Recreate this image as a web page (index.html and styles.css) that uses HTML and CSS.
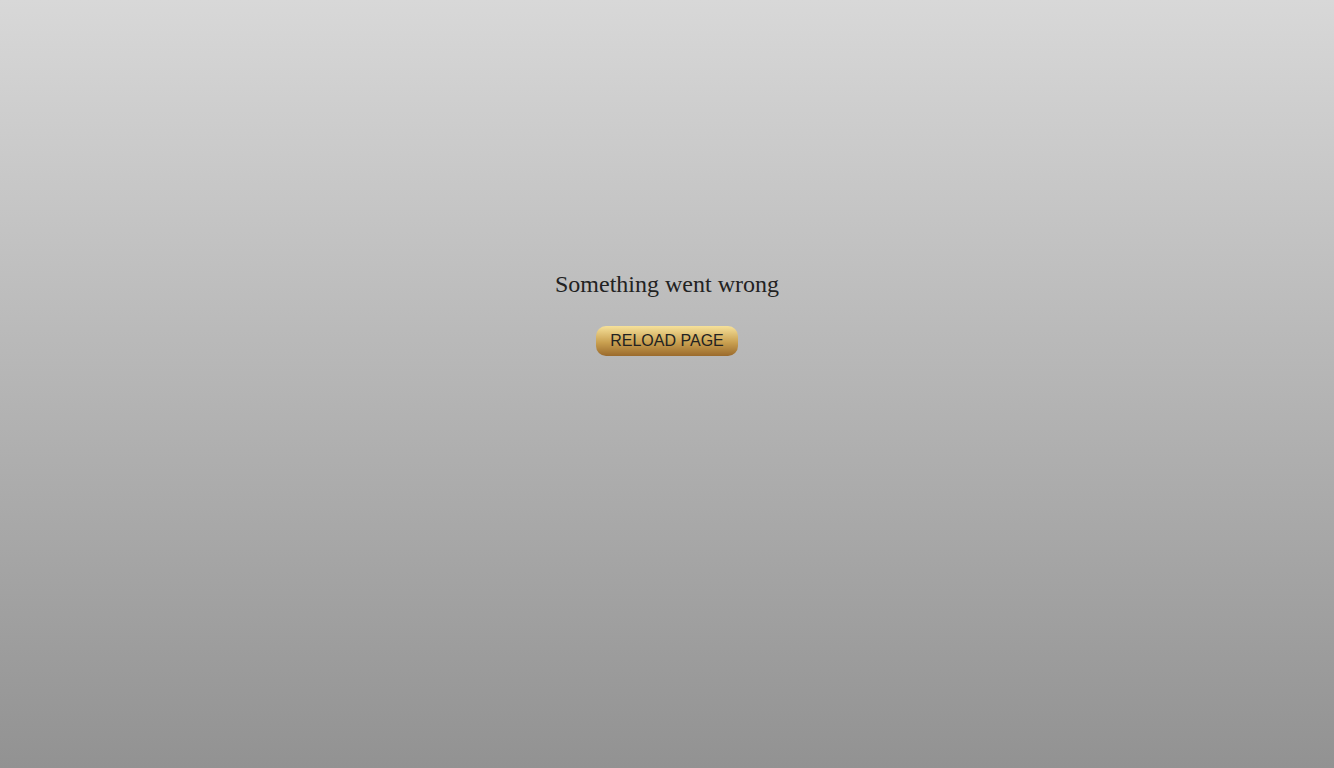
FILE: index.html
```html
<!DOCTYPE html>
<html>
<head>
<meta charset="utf-8">
<link rel="stylesheet" href="styles.css">
</head>
<body>
<main class="error">
  <h1 class="error-title">Something went wrong</h1>
  <button class="reload-btn">RELOAD PAGE</button>
</main>
</body>
</html>
```
FILE: styles.css
```css
html, body {
  margin: 0;
  height: 100%;
}
body {
  background: linear-gradient(to bottom, #d8d8d8, #929292);
  font-family: "Liberation Serif", serif;
}
.error {
  display: flex;
  flex-direction: column;
  align-items: center;
  padding-top: 268px;
}
.error-title {
  margin: 0;
  font-size: 24px;
  font-weight: normal;
  color: #222;
  line-height: 32px;
}
.reload-btn {
  margin-top: 26px;
  width: 142px;
  height: 30px;
  border: none;
  border-radius: 10px;
  background: linear-gradient(to bottom, #f6e19a, #c9a050 55%, #9a6a2c);
  font-family: "Liberation Sans", sans-serif;
  font-size: 16px;
  color: #222;
  padding: 0;
  cursor: pointer;
}
```
